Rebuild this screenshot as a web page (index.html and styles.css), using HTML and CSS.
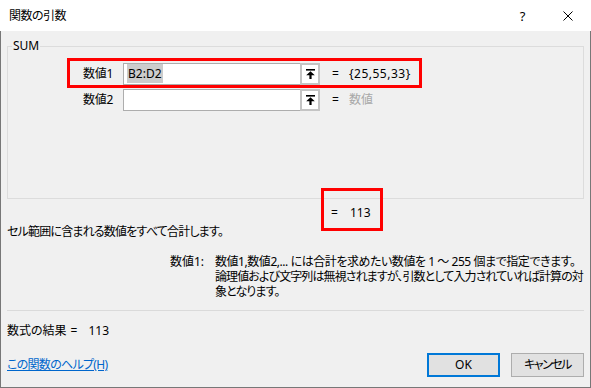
FILE: index.html
```html
<!DOCTYPE html>
<html lang="ja">
<head>
    <meta charset="UTF-8">
    <title>関数の引数</title>
    <link rel="stylesheet" href="styles.css">
</head>
<body>
    <div class="dialog">
        <div class="titlebar">
            <span class="title">関数の引数</span>
            <span class="cap-btn">?</span>
            <span class="cap-btn">
                <svg width="10" height="10" viewBox="0 0 10 10"><path d="M0.5 0.5 L9.5 9.5 M9.5 0.5 L0.5 9.5" stroke="#000" stroke-width="1" fill="none"/></svg>
            </span>
        </div>

        <div class="dialog-body">
            <fieldset class="func-group">
                <legend>SUM</legend>
                <div class="arg-row marked">
                    <span class="arg-label">数値1</span>
                    <div class="ref-input">
                        <span class="ref-text"><span class="sel">B2:D2</span></span>
                        <span class="ref-btn">
                            <svg width="9" height="10" viewBox="0 0 9 10"><rect x="0" y="0" width="9" height="1.6"/><path d="M4.5 2.2 L8.8 6.2 H5.6 V10 H3.4 V6.2 H0.2 Z"/></svg>
                        </span>
                    </div>
                    <span class="eq">=</span>
                    <span class="arg-value">{25,55,33}</span>
                </div>
                <div class="arg-row">
                    <span class="arg-label">数値2</span>
                    <div class="ref-input">
                        <span class="ref-text"></span>
                        <span class="ref-btn">
                            <svg width="9" height="10" viewBox="0 0 9 10"><rect x="0" y="0" width="9" height="1.6"/><path d="M4.5 2.2 L8.8 6.2 H5.6 V10 H3.4 V6.2 H0.2 Z"/></svg>
                        </span>
                    </div>
                    <span class="eq">=</span>
                    <span class="arg-value hint">数値</span>
                </div>
            </fieldset>

            <div class="func-result">
                <span class="eq">=</span>
                <span>113</span>
            </div>

            <p class="func-desc">セル範囲に含まれる数値をすべて合計します。</p>

            <div class="arg-help">
                <span class="arg-help-name">数値1:</span>
                <div class="arg-help-text">
                    <div class="help-line wide">数値1,数値2,... には合計を求めたい数値を 1 ～ 255 個まで指定できます。</div>
                    <div class="help-line">論理値および文字列は無視されますが、引数として入力されていれば計算の対</div>
                    <div class="help-line">象となります。</div>
                </div>
            </div>

            <div class="sep"></div>

            <div class="formula-result">
                <span>数式の結果</span>
                <span class="formula-eq">=</span>
                <span>113</span>
            </div>

            <div class="footer">
                <a href="#" class="help-link">この関数のヘルプ(H)</a>
                <div class="buttons">
                    <button class="btn btn-default">OK</button>
                    <button class="btn btn-jp">キャンセル</button>
                </div>
            </div>
        </div>
    </div>
</body>
</html>
```

FILE: styles.css
```css
body {
    margin: 0;
    background-color: #f0f0f0;
}
.dialog {
    width: 591px;
    height: 388px;
    display: flex;
    flex-direction: column;
    font-family: "Noto Sans", "Noto Sans CJK JP", sans-serif;
    font-size: 12px;
    line-height: 16px;
    font-feature-settings: "palt";
    color: #000;
    overflow: hidden;
}
.titlebar {
    height: 31px;
    flex: none;
    background-color: #fff;
    display: flex;
    align-items: center;
    padding: 0 1px 0 9px;
}
.title {
    flex: 1;
    letter-spacing: -0.5px;
}
.cap-btn {
    width: 45px;
    height: 31px;
    display: flex;
    align-items: center;
    justify-content: center;
    font-size: 13px;
}
.dialog-body {
    flex: 1;
    background-color: #f0f0f0;
    border: 1px solid #777;
    border-top: 0;
    padding: 0 6px;
    display: flex;
    flex-direction: column;
}
.func-group {
    margin: 7px 0 0;
    padding: 9px 0 0;
    border: 1px solid #dcdcdc;
    height: 161px;
    box-sizing: border-box;
    min-width: 0;
}
.func-group legend {
    margin-left: 4px;
    padding: 0 1px;
    line-height: 16px;
}
.arg-row {
    display: flex;
    align-items: center;
    height: 22px;
    position: relative;
}
.arg-row + .arg-row {
    margin-top: 4px;
}
.arg-label {
    width: 105px;
    margin-right: 10px;
    text-align: right;
    letter-spacing: -0.3px;
}
.ref-input {
    width: 197px;
    height: 22px;
    box-sizing: border-box;
    border: 1px solid #adadad;
    background-color: #fff;
    display: flex;
}
.ref-text {
    flex: 1;
    padding-left: 3px;
    line-height: 20px;
}
.sel {
    background-color: #cccccc;
    padding: 1px 1px;
}
.ref-btn {
    width: 20px;
    margin: -1px -1px -1px 0;
    box-sizing: border-box;
    border: 2px solid #c4c4c4;
    background-color: #fff;
    display: flex;
    align-items: center;
    justify-content: center;
}
.eq {
    margin-left: 12px;
    width: 17px;
}
.arg-value {
    letter-spacing: 0.5px;
}
.hint {
    color: #a8a8a8;
    letter-spacing: 0;
}
.marked::after {
    content: "";
    position: absolute;
    left: 59px;
    top: -5px;
    width: 355px;
    height: 30px;
    border: 3px solid #f00;
    box-sizing: border-box;
}
.func-result {
    position: relative;
    display: flex;
    height: 16px;
    margin: 6px 0 0 324px;
}
.func-result .eq {
    margin-left: 0;
    width: 19px;
}
.func-result::after {
    content: "";
    position: absolute;
    left: -10px;
    top: -17px;
    width: 62px;
    height: 43px;
    border: 3px solid #f00;
    box-sizing: border-box;
}
.func-desc {
    margin: 3px 0 0;
    letter-spacing: -0.8px;
}
.arg-help {
    display: flex;
    margin-top: 14px;
    padding-left: 163px;
}
.arg-help-name {
    width: 45px;
    flex: none;
    line-height: 15px;
}
.arg-help-text {
    white-space: nowrap;
    letter-spacing: -0.9px;
}
.help-line {
    height: 15px;
    line-height: 15px;
}
.help-line.wide {
    letter-spacing: -0.45px;
}
.sep {
    height: 1px;
    margin-top: 11px;
    background-color: #dadada;
}
.formula-result {
    margin-top: 12px;
    display: flex;
}
.formula-eq {
    margin: 0 11px 0 4px;
}
.footer {
    margin-top: 14px;
    height: 24px;
    display: flex;
    align-items: center;
}
.help-link {
    color: #0066cc;
    text-decoration: underline;
    letter-spacing: -0.7px;
}
.buttons {
    margin-left: auto;
    display: flex;
    gap: 11px;
}
.btn {
    width: 73px;
    height: 24px;
    padding: 0;
    border: 1px solid #adadad;
    background-color: #e1e1e1;
    font: inherit;
    color: #000;
}
.btn-jp {
    letter-spacing: -1.5px;
}
.btn-default {
    border: 2px solid #0078d7;
}
```
